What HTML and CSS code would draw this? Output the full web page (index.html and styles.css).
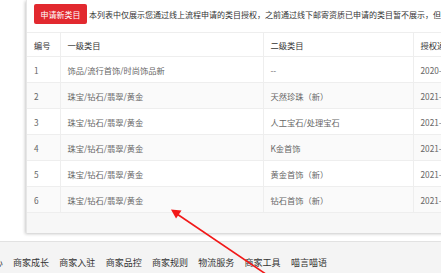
FILE: index.html
```html
<!DOCTYPE html>
<html lang="zh-CN">
<head>
  <meta charset="UTF-8">
  <meta name="viewport" content="width=device-width, initial-scale=1.0">
  <title>类目授权</title>
  <link rel="stylesheet" href="styles.css">
</head>
<body>
  <div class="panel">
    <div class="toolbar">
      <button type="button" class="btn-apply">申请新类目</button>
      <span class="tip">本列表中仅展示您通过线上流程申请的类目授权，之前通过线下邮寄资质已申请的类目暂不展示，但不影响正常经营</span>
    </div>
    <table class="cat-table">
      <colgroup>
        <col class="c-no">
        <col class="c-first">
        <col class="c-second">
        <col class="c-time">
      </colgroup>
      <thead>
        <tr>
          <th>编号</th>
          <th>一级类目</th>
          <th>二级类目</th>
          <th>授权通过时间</th>
        </tr>
      </thead>
      <tbody>
        <tr><td>1</td><td>饰品/流行首饰/时尚饰品新</td><td>--</td><td>2020-11-26 14:32:10</td></tr>
        <tr><td>2</td><td>珠宝/钻石/翡翠/黄金</td><td>天然珍珠（新）</td><td>2021-03-02 10:15:47</td></tr>
        <tr><td>3</td><td>珠宝/钻石/翡翠/黄金</td><td>人工宝石/处理宝石</td><td>2021-03-02 10:16:05</td></tr>
        <tr><td>4</td><td>珠宝/钻石/翡翠/黄金</td><td>K金首饰</td><td>2021-03-02 10:16:22</td></tr>
        <tr><td>5</td><td>珠宝/钻石/翡翠/黄金</td><td>黄金首饰（新）</td><td>2021-03-02 10:16:40</td></tr>
        <tr><td>6</td><td>珠宝/钻石/翡翠/黄金</td><td>钻石首饰（新）</td><td>2021-03-02 10:16:58</td></tr>
      </tbody>
    </table>
    <div class="panel-foot"></div>
  </div>

  <div class="footer">
    <nav class="footer-nav">
      <a href="#">服务中心</a>
      <a href="#">商家成长</a>
      <a href="#">商家入驻</a>
      <a href="#">商家品控</a>
      <a href="#">商家规则</a>
      <a href="#">物流服务</a>
      <a href="#">商家工具</a>
      <a href="#">喵言喵语</a>
    </nav>
  </div>

  <!-- red pointer drawn over the page -->
  <svg class="pointer" width="441" height="273" viewBox="0 0 441 273">
    <line x1="177" y1="214" x2="285" y2="287" stroke="#f21818" stroke-width="1.6"/>
    <polygon points="171,209.5 181.5,210.5 176,218.5" fill="#f21818"/>
  </svg>
</body>
</html>
```

FILE: styles.css
```css
body {
  margin: 0;
  padding: 0;
  background-color: #fff;
  font-family: "Noto Sans CJK SC", "Liberation Sans", sans-serif;
  width: 441px;
  height: 273px;
  overflow: hidden;
  position: relative;
}

.panel {
  margin-left: 26px;
  width: 540px;
  background-color: #fff;
  border-left: 1px solid #e6e6e6;
  box-shadow: -1px 1px 3px rgba(0, 0, 0, 0.22);
}

.toolbar {
  display: flex;
  align-items: center;
  gap: 2px;
  padding: 4px 0 8px 7px;
  white-space: nowrap;
}

.btn-apply {
  flex: none;
  width: 53px;
  height: 20px;
  padding: 0;
  border: none;
  border-radius: 2px;
  background-color: #e2292f;
  color: #fff;
  font-family: inherit;
  font-size: 8px;
  cursor: pointer;
}

.tip {
  font-size: 8px;
  color: #333;
}

.cat-table {
  width: 540px;
  border-collapse: collapse;
  table-layout: fixed;
  font-size: 8.25px;
}

.c-no { width: 33px; }
.c-first { width: 203px; }
.c-second { width: 150px; }

.cat-table th,
.cat-table td {
  padding: 0 7px;
  text-align: left;
  white-space: nowrap;
  overflow: hidden;
  border: 1px solid #eee;
  border-left: none;
}

.cat-table th {
  height: 23px;
  font-weight: normal;
  color: #333;
}

.cat-table td {
  height: 25px;
  color: #666;
}

.cat-table tbody tr:nth-child(even) {
  background-color: #fafafa;
}

.panel-foot {
  height: 20px;
  background-color: #f7f7f7;
}

.footer {
  margin-top: 8px;
  height: 40px;
  border-top: 1px solid #e2e2e2;
  background-color: #f4f4f4;
}

.footer-nav {
  display: flex;
  gap: 10.3px;
  margin-left: -33.3px;
  padding-top: 15px;
  white-space: nowrap;
}

.footer-nav a {
  font-size: 9px;
  line-height: 12px;
  color: #333;
  text-decoration: none;
}

.pointer {
  position: absolute;
  left: 0;
  top: 0;
  pointer-events: none;
}
```
